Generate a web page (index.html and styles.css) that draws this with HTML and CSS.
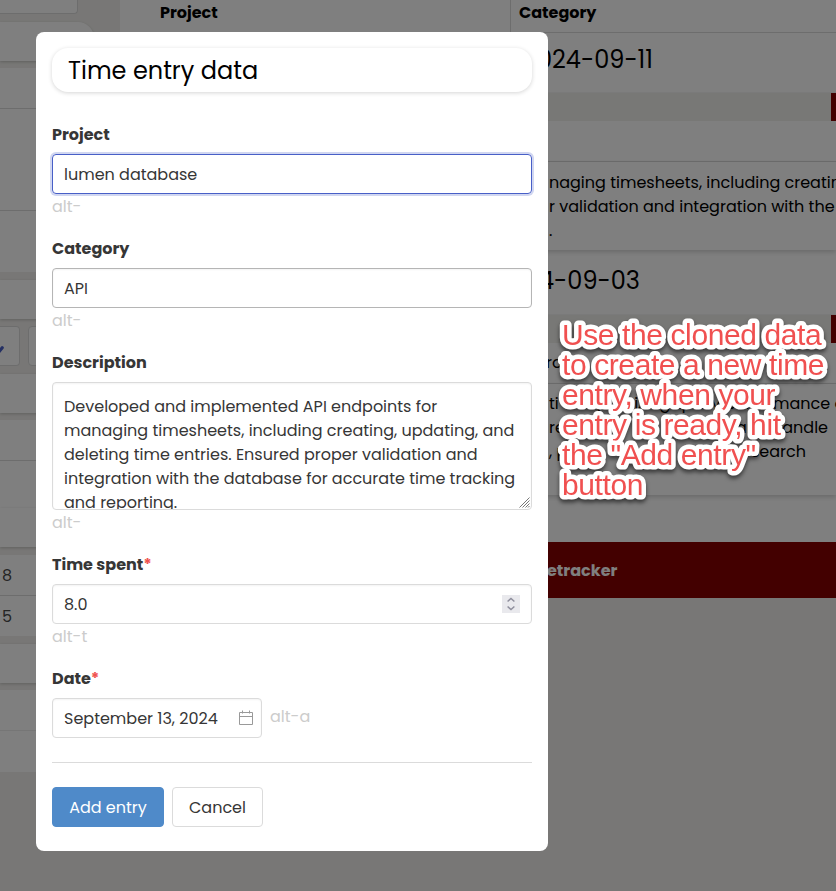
FILE: index.html
```
<!DOCTYPE html>
<html lang="en">
<head>
<meta charset="utf-8">
<title>Time entry data</title>
<link rel="stylesheet" href="styles.css">
</head>
<body>
<div class="page">
  <aside class="side">
    <div class="side-input"></div>
    <div class="side-card rounded"></div>
    <div class="side-block tall"><i></i><i></i><i></i></div>
    <div class="side-card"></div>
    <div class="side-buttons"><div class="side-btn first"><svg width="8" height="12" viewBox="0 0 8 12"><path d="M-2 9 2.2 3.8" fill="none" stroke="#485fc7" stroke-width="3.2" stroke-linecap="round"/></svg></div><div class="side-btn"></div></div>
    <div class="side-card"></div>
    <div class="side-block pair"><i></i><i></i></div>
    <div class="side-card flush"></div>
    <div class="side-block totals"><i>8</i><i>5</i></div>
    <div class="side-card"></div>
    <div class="side-block rows"><i></i><i></i></div>
  </aside>
  <main class="main">
    <div class="cols"><b class="c1">Project</b><b class="c2">Category</b></div>
    <h2 class="day d1">024-09-11</h2>
    <div class="bar"></div>
    <div class="meta"></div>
    <div class="entry e1"><span class="ln">naging timesheets, including creating,</span><span class="ln">r validation and integration with the</span><span class="ln">.</span></div>
    <h2 class="day d2">4-09-03</h2>
    <div class="bar"></div>
    <div class="meta">ro</div>
    <div class="entry e2"><span class="ln w1"><em>ti</em><em>optimizing query performance of</em></span><span class="ln w2"><em>re</em><em>and handle</em></span><span class="ln w3"><em>, p</em><em>search</em></span></div>
    <footer class="foot"><b>etracker</b></footer>
  </main>
</div>
<div class="backdrop"></div>
<section class="modal">
  <h1>Time entry data</h1>
  <label>Project</label>
  <div class="input focus">lumen database</div>
  <p class="hint">alt-</p>
  <label>Category</label>
  <div class="input dark">API</div>
  <p class="hint">alt-</p>
  <label>Description</label>
  <div class="input area"><span class="ln">Developed and implemented API endpoints for</span><span class="ln">managing timesheets, including creating, updating, and</span><span class="ln">deleting time entries. Ensured proper validation and</span><span class="ln">integration with the database for accurate time tracking</span><span class="ln">and reporting.</span>
    <svg class="grip" width="11" height="11" viewBox="0 0 11 11"><path d="M.5 10.5l10-10M3.5 10.5l7-7M6.5 10.5l4-4M9 10.5l1.5-1.5" stroke="#777" fill="none"/></svg></div>
  <p class="hint">alt-</p>
  <label>Time spent<em>*</em></label>
  <div class="input num">8.0<div class="spin"><svg width="8" height="14" viewBox="0 0 8 14"><path d="M.6 4.5 4 1.4l3.4 3.1M.6 9.5 4 12.6l3.4-3.1" fill="none" stroke="#8f8f9d" stroke-width="1.5"/></svg></div></div>
  <p class="hint">alt-t</p>
  <label>Date<em>*</em></label>
  <div class="date-row"><div class="input date">September 13, 2024<svg width="16" height="16" viewBox="0 0 16 16"><path d="M1.5 2.5h13v12h-13zM1.5 6.5h13M4.5.5v3M11.5.5v3" fill="none" stroke="#999"/></svg></div><p class="hint">alt-a</p></div>
  <div class="actions"><div class="btn primary">Add entry</div><div class="btn">Cancel</div></div>
</section>
<svg class="note" width="284" height="200" viewBox="0 0 284 200">
  <text x="10" y="35">Use the cloned data</text>
  <text x="10" y="65">to create a new time</text>
  <text x="10" y="95">entry, when your</text>
  <text x="10" y="125">entry is ready, hit</text>
  <text x="10" y="155">the "Add entry"</text>
  <text x="10" y="185">button</text>
</svg>
</body>
</html>
```
FILE: styles.css
```
* { box-sizing: border-box; }
body {
  margin: 0;
  height: 891px;
  overflow: hidden;
  position: relative;
  background: #f0efec;
  color: #000;
  font: 16px/24px Poppins, Inter, sans-serif;
}
h1, h2, p { margin: 0; font-weight: 400; }
em, i { font-style: normal; }
.ln { display: block; white-space: nowrap; }
.page { display: flex; height: 891px; }
.side { width: 120px; flex: none; color: #4a4a4a; }
.side-input { width: 78px; height: 14px; background: #fff; border: 1px solid #dbdbdb; border-width: 0 1px 1px 0; border-radius: 0 0 4px 0; margin-bottom: 8px; }
.side-card { width: 94px; height: 39px; background: #fff; box-shadow: 0 1px 3px rgba(0,0,0,.2); margin-bottom: 7px; }
.side-card.rounded { border-radius: 0 16px 16px 0; }
.side-card.flush { margin-bottom: 8px; }
.side-block { width: 94px; background: #fff; margin-bottom: 8px; }
.side-block i { display: block; height: 41px; padding: 9px 2px 0; border-bottom: 1px solid #dbdbdb; }
.side-block i:last-child { border-bottom: 0; }
.tall i:nth-child(2) { height: 102px; }
.tall i:nth-child(3) { height: 61px; }
.side-buttons { display: flex; gap: 8px; margin-bottom: 8px; }
.side-btn { height: 40px; width: 60px; background: #fff; border: 1px solid #dbdbdb; border-radius: 4px; }
.side-btn.first { width: 20px; border-left: 0; border-radius: 0 4px 4px 0; padding-top: 12px; }
.side-block.pair { margin-bottom: 0; }
.pair i:last-child { height: 47px; }
.totals i:last-child { height: 40px; }
.rows i:first-child { border-color: #ededed; }
.main { flex: 1; min-width: 0; height: 598px; overflow: hidden; background: #fff; }
.cols { display: flex; height: 33px; border-bottom: 1px solid #dbdbdb; }
.cols b { padding-top: 1px; }
.cols .c1 { width: 391px; padding-left: 40px; border-right: 1px solid #dbdbdb; }
.cols .c2 { padding-left: 8px; }
.day { height: 59px; font-size: 24px; line-height: 53px; padding-left: 417px; white-space: nowrap; }
.bar { height: 29px; background: linear-gradient(90deg, #f1f0ec 711px, #870000 711px); border-top: 1px solid #f4f4f4; }
.meta { height: 41px; padding: 8px 0 0 426px; border-bottom: 1px solid #dbdbdb; }
.entry { padding: 9px 0 0 429px; height: 88px; box-shadow: 0 2px 5px rgba(0,0,0,.18); }
.d2 { height: 64px; line-height: 61px; padding-left: 419px; }
.e2 { height: 111px; padding-top: 8px; }
.e2 .ln { display: flex; justify-content: space-between; }
.w1 { width: 301px; }
.w2 { width: 279px; }
.w3 { width: 257px; }
.foot { margin-top: 47px; height: 56px; background: #870000; color: #fff; padding: 17px 427px; }
.backdrop { position: absolute; inset: 0; background: rgba(0,0,0,.5); }
.modal { position: absolute; left: 36px; top: 32px; width: 512px; height: 819px; padding: 16px; background: #fff; border-radius: 8px; color: #363636; }
h1 { height: 44px; margin-bottom: 30px; padding-left: 16px; border-radius: 16px; box-shadow: 0 1px 4px rgba(0,0,0,.17); color: #000; font-size: 24px; line-height: 45px; }
label { display: block; height: 32px; padding-top: 1px; font-weight: 700; }
label em { color: #ef5350; }
.input { height: 40px; padding: 8px 11px 0; border: 1px solid #dbdbdb; border-radius: 4px; box-shadow: inset 0 1px 2px rgba(10,10,10,.05); white-space: nowrap; }
.input.focus { border-color: #485fc7; box-shadow: 0 0 0 2px rgba(72,95,199,.25); }
.input.dark { border-color: #b5b5b5; }
.input.area { height: 128px; padding-top: 12px; overflow: hidden; position: relative; }
.grip { position: absolute; right: 1px; bottom: 1px; }
.hint { height: 24px; padding-top: 1px; margin-bottom: 18px; color: #ccc; }
.num { display: flex; justify-content: space-between; }
.spin { width: 18px; height: 18px; margin-top: 2px; background: #e9e9ed; display: grid; place-items: center; }
.date-row { display: flex; gap: 8px; height: 40px; }
.input.date { width: 210px; display: flex; justify-content: space-between; padding-right: 7px; }
.date svg { margin-top: 3px; }
.date-row .hint { padding-top: 7px; }
.actions { display: flex; gap: 8px; margin-top: 24px; padding-top: 24px; border-top: 1px solid #dbdbdb; }
.btn { width: 91px; height: 40px; border: 1px solid #dbdbdb; border-radius: 4px; text-align: center; line-height: 40px; }
.primary { width: 112px; background: #4f8ac9; border-color: #4f8ac9; color: #fff; }
.note { position: absolute; left: 552px; top: 310px; filter: drop-shadow(0 3px 2px rgba(0,0,0,.55)); }
.note text { font: 30px "Liberation Sans", sans-serif; letter-spacing: -.4px; fill: #f05050; stroke: #fff; stroke-width: 9px; stroke-linejoin: round; paint-order: stroke fill; }
```
